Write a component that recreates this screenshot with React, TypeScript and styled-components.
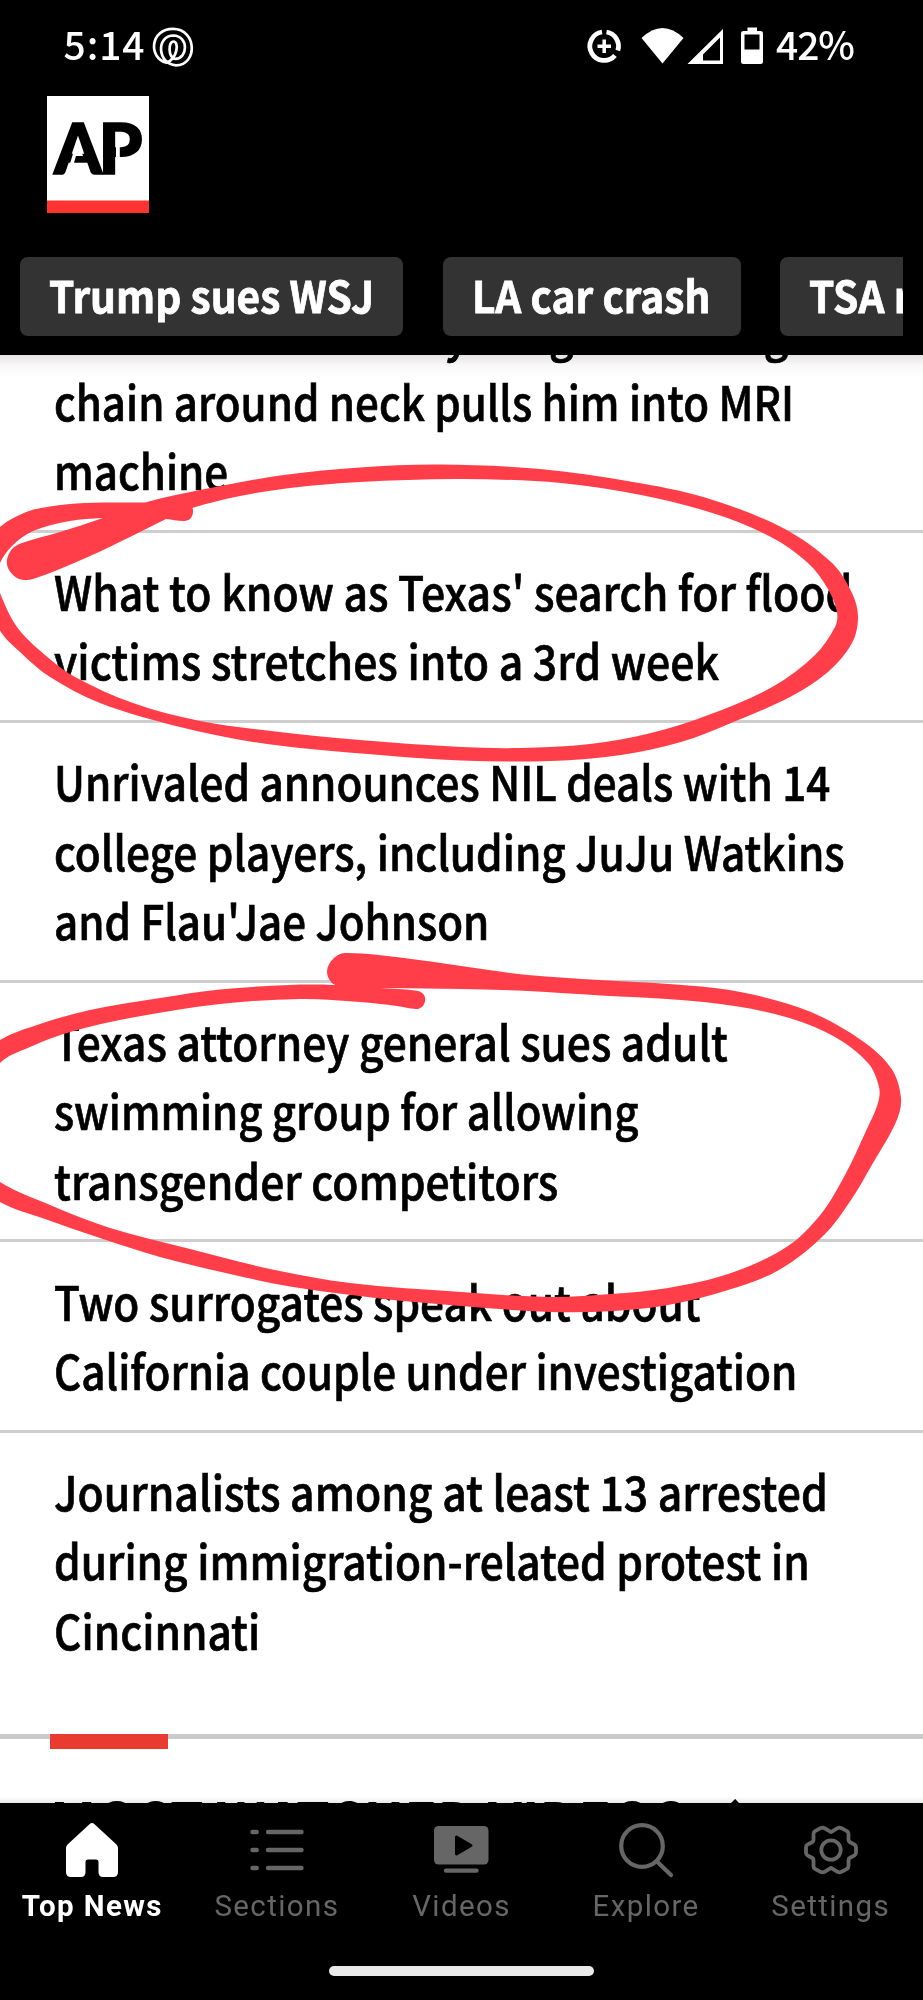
import React from "react";
import styled, { createGlobalStyle } from "styled-components";

const Global = createGlobalStyle`
  * { box-sizing: border-box; }
  body { margin: 0; background: #000; }
`;

const sans = `"Noto Sans CJK SC", "Noto Sans", sans-serif`;

const Screen = styled.main`
  position: relative;
  width: 923px;
  height: 2000px;
  overflow: hidden;
  display: flex;
  flex-direction: column;
  background: #fff;
  font-family: ${sans};
`;

const Header = styled.header`
  flex: none;
  height: 355px;
  background: #000;
  color: #fff;
  display: flex;
  flex-direction: column;
`;

const StatusBar = styled.div`
  height: 96px;
  padding: 0 69px 0 63.5px;
  display: flex;
  align-items: flex-start;
  justify-content: space-between;
`;

const StatusGroup = styled.div<{ $gap: number }>`
  display: flex;
  align-items: flex-start;
  gap: ${(p) => p.$gap}px;
`;

const StatusText = styled.span<{ $spacing: number }>`
  font-size: 39px;
  font-weight: 500;
  line-height: 56px;
  margin-top: 15px;
  letter-spacing: ${(p) => p.$spacing}px;
`;

const Logo = styled.svg`
  display: block;
  flex: none;
  margin-left: 47px;
`;

const LogoText = styled.text`
  font-family: Lato, sans-serif;
  font-weight: 900;
  font-size: 70px;
  stroke: #000;
  stroke-width: 1.6px;
`;

const Topics = styled.nav`
  margin: 44px 20px 0;
  display: flex;
  gap: 39.5px;
  overflow: hidden;
`;

const Topic = styled.a<{ $width: number }>`
  flex: none;
  width: ${(p) => p.$width}px;
  height: 79px;
  padding-left: 29px;
  border-radius: 8px;
  background: #333;
  color: #fff;
  font-size: 43.5px;
  font-weight: 700;
  line-height: 75px;
  white-space: nowrap;
`;

const TopicLabel = styled.span`
  display: inline-block;
  transform: scaleX(0.934);
  transform-origin: left;
  -webkit-text-stroke: 0.8px #fff;
`;

const Feed = styled.div`
  flex: 1;
  min-height: 0;
  overflow: hidden;
  position: relative;
  &::before {
    content: "";
    position: absolute;
    inset: 0 0 auto;
    height: 22px;
    background: linear-gradient(#e6e3e4, #f8f8f8 45%, rgba(255, 255, 255, 0));
    mix-blend-mode: multiply;
  }
  &::after {
    content: "";
    position: absolute;
    inset: auto 0 0;
    height: 6px;
    background: linear-gradient(rgba(0, 0, 0, 0), rgba(0, 0, 0, 0.09));
  }
`;

const Stories = styled.div`
  margin-top: -82px;
`;

const Story = styled.article`
  padding: 23.3px 0 25.5px 54px;
  border-bottom: 3px solid #cecece;
  &:last-child {
    border-bottom: 0;
    padding-bottom: 69.5px;
  }
`;

const Line = styled.span<{ $fit: number }>`
  display: block;
  width: max-content;
  height: 69.3px;
  line-height: 69.3px;
  font-size: 48px;
  font-weight: 500;
  color: #000;
  white-space: nowrap;
  transform: scaleX(${(p) => p.$fit});
  transform-origin: left;
  -webkit-text-stroke: 0.7px #000;
`;

const Section = styled.section`
  border-top: 5px solid #cacaca;
  padding-left: 50px;
`;

const Accent = styled.div`
  width: 118px;
  height: 15px;
  margin-top: -5px;
  background: #e93b30;
`;

const SectionTitle = styled.h2`
  margin: 30.5px 0 0;
  display: flex;
  align-items: center;
  gap: 44px;
  font-size: 54px;
  font-weight: 700;
  line-height: 80px;
  white-space: nowrap;
`;

const TabBar = styled.footer`
  flex: none;
  height: 197px;
  background: #000;
  display: flex;
  flex-direction: column;
  align-items: center;
`;

const Tabs = styled.div`
  align-self: stretch;
  display: grid;
  grid-template-columns: repeat(5, 1fr);
`;

const Tab = styled.a<{ $active?: boolean }>`
  display: flex;
  flex-direction: column;
  align-items: center;
  padding-top: 17px;
  color: ${(p) => (p.$active ? "#fff" : "#666")};
  font-family: Roboto, sans-serif;
  font-size: 29.5px;
  font-weight: ${(p) => (p.$active ? 700 : 400)};
  letter-spacing: 1.4px;
  line-height: 36px;
`;

const TabIcon = styled.svg`
  width: 60px;
  height: 60px;
  margin-bottom: 8px;
`;

const HomeHandle = styled.div`
  width: 265px;
  height: 10px;
  margin-top: 42px;
  border-radius: 5px;
  background: #eaeaea;
`;

const Ink = styled.svg`
  position: absolute;
  top: 0;
  left: 0;
  pointer-events: none;
`;

type Pt = [number, number];

/* Closed Catmull-Rom curve through the points, as cubic segments. */
function smooth(p: Pt[]): string {
  const n = p.length;
  let d = `M${p[0]}`;
  for (let i = 0; i < n; i++) {
    const a = p[(i - 1 + n) % n], b = p[i], c = p[(i + 1) % n], e = p[(i + 2) % n];
    const k = Math.hypot(c[0] - b[0], c[1] - b[1]) / 3;
    const t1 = [c[0] - a[0], c[1] - a[1]], t2 = [e[0] - b[0], e[1] - b[1]];
    const l1 = Math.hypot(t1[0], t1[1]) || 1, l2 = Math.hypot(t2[0], t2[1]) || 1;
    d += `C${b[0] + (t1[0] / l1) * k},${b[1] + (t1[1] / l1) * k} ${c[0] - (t2[0] / l2) * k},${c[1] - (t2[1] / l2) * k} ${c}`;
  }
  return d + "Z";
}

const floodMark: Pt[] = [
  [22, 543], [60, 532], [100, 519], [147, 502], [200, 490], [280, 475.5], [360, 467.5], [440, 464.5], [540, 469],
  [633, 482], [705, 497.5], [781, 527], [831, 562], [852, 593], [858, 617], [852, 643], [828, 672], [790, 697],
  [731, 723], [681, 742], [621, 755], [551, 761], [461, 760.5], [380, 755], [267, 744], [180, 727], [100, 703],
  [50, 677], [20, 652], [0, 630.5], [-16, 590], [-14, 548], [0, 527], [25, 512.5], [50, 506.5], [85, 503], [147, 502.5],
  [180, 503], [191, 506], [193, 512], [190, 519], [183, 521], [166, 519], [135, 518], [102, 518], [70, 521], [33, 531], [12, 546], [0, 563], [-3, 578],
  [0, 593], [17, 627], [45, 655], [75, 677], [133, 703], [200, 721], [267, 730.5], [360, 740], [461, 747], [520, 748],
  [590, 744], [651, 733], [711, 714], [774, 686], [815, 655], [835, 627], [837, 612], [828, 589], [808, 563],
  [771, 537], [714, 513.5], [641, 495], [561, 483], [461, 479], [360, 482], [290, 488], [240, 496], [192, 508],
  [166, 519], [130, 537], [90, 556], [33, 579], [19, 579], [9, 570], [7, 560], [12, 549],
];

const texasMark: Pt[] = [
  [345, 953], [400, 957.5], [461, 966], [528, 975], [600, 980], [701, 986.5], [755, 995], [811, 1012], [861, 1040],
  [891, 1068], [901, 1098], [896, 1122], [873, 1163], [851, 1200], [824, 1235], [779, 1270], [728, 1290], [668, 1305],
  [614, 1311], [550, 1312], [461, 1306], [380, 1298.5], [290, 1286.5], [230, 1274], [160, 1257], [100, 1238],
  [45, 1219], [0, 1202], [-24, 1180], [-34, 1120], [-20, 1060], [0, 1040], [40, 1024], [90, 1010], [160, 998],
  [220, 989.5], [290, 985], [333, 985], [380, 988], [418, 991], [424, 995], [425, 1001], [422, 1007], [416, 1009], [397, 1006], [360, 1002],
  [300, 999], [220, 1004], [130, 1018], [70, 1032], [30, 1047], [0, 1063], [-12, 1090], [-18, 1130], [-10, 1168],
  [0, 1182], [50, 1205], [110, 1228], [190, 1249], [270, 1269], [350, 1283], [461, 1292], [550, 1297], [611, 1294],
  [668, 1288], [731, 1273], [788, 1246], [821, 1214], [845, 1175], [866, 1131], [878, 1103], [879, 1087], [868, 1063],
  [835, 1037], [791, 1018.5], [738, 1006.5], [674, 999.5], [601, 995.5], [528, 991], [461, 989], [390, 988], [345, 987],
  [332, 983], [327, 971], [333, 959],
];

type FittedLine = [string, number];

const stories: FittedLine[][] = [
  [
    ["Man dies after heavy weight-training", 0.883],
    ["chain around neck pulls him into MRI", 0.876],
    ["machine", 0.878],
  ],
  [
    ["What to know as Texas' search for flood", 0.89],
    ["victims stretches into a 3rd week", 0.891],
  ],
  [
    ["Unrivaled announces NIL deals with 14", 0.879],
    ["college players, including JuJu Watkins", 0.882],
    ["and Flau'Jae Johnson", 0.877],
  ],
  [
    ["Texas attorney general sues adult", 0.885],
    ["swimming group for allowing", 0.873],
    ["transgender competitors", 0.888],
  ],
  [
    ["Two surrogates speak out about", 0.883],
    ["California couple under investigation", 0.88],
  ],
  [
    ["Journalists among at least 13 arrested", 0.89],
    ["during immigration-related protest in", 0.884],
    ["Cincinnati", 0.885],
  ],
];

const topics = [
  { label: "Trump sues WSJ", width: 383 },
  { label: "LA car crash", width: 298 },
  { label: "TSA rules", width: 260 },
];

const tabs = [
  {
    label: "Top News",
    icon: (
      <path
        fill="currentColor"
        d="M27.5 4.2Q30 2 32.5 4.2L54.5 24.5Q56 26 56 28V52Q56 57 51 57H41Q36.5 57 36.5 52V42Q36.5 39.5 34 39.5H26Q23.5 39.5 23.5 42V52Q23.5 57 19 57H9Q4 57 4 52V28Q4 26 5.5 24.5Z"
      />
    ),
  },
  {
    label: "Sections",
    icon: (
      <path stroke="currentColor" strokeWidth="4.4" strokeLinecap="round" d="M5.5 12H9.7M21 12H54.5M5.5 30H9.7M21 30H54.5M5.5 48H9.7M21 48H54.5" />
    ),
  },
  {
    label: "Videos",
    icon: (
      <>
        <rect x="3" y="6" width="54.5" height="38.5" rx="4.5" fill="currentColor" />
        <path d="M25.5 17L40 25.5L25.5 34Z" fill="#000" stroke="#000" strokeWidth="3" strokeLinejoin="round" />
        <path stroke="currentColor" strokeWidth="4.4" strokeLinecap="round" d="M15 50.6H45.5" />
      </>
    ),
  },
  {
    label: "Explore",
    icon: (
      <g stroke="currentColor" strokeWidth="4.2" strokeLinecap="round" fill="none">
        <circle cx="26" cy="26" r="20.8" />
        <path d="M41.5 42L55 55" />
      </g>
    ),
  },
  {
    label: "Settings",
    icon: (
      <g stroke="currentColor" strokeWidth="3.8" strokeLinejoin="round" fill="none">
        <path d="M30 12.2L36.5 8.2Q38.5 7.2 40.5 8.2L46 11.2Q47.5 12.2 47.5 14V20Q47.500 21.3 48.7 22L53.5 24.6Q55 25.5 55 27.5V32.5Q55 34.5 53.5 35.4L48.7 38Q47.5 38.7 47.5 40V46Q47.5 47.8 46 48.8L40.5 51.8Q38.5 52.8 36.5 51.8L30 47.8L23.5 51.8Q21.5 52.8 19.5 51.8L14 48.8Q12.5 47.8 12.5 46V40Q12.5 38.7 11.3 38L6.500 35.4Q5 34.5 5 32.5V27.5Q5 25.5 6.5 24.6L11.3 22Q12.5 21.3 12.5 20V14Q12.5 12.2 14 11.2L19.5 8.2Q21.5 7.2 23.5 8.2Z" />
        <circle cx="30" cy="30" r="9.7" />
      </g>
    ),
  },
];

function SpiralIcon() {
  return (
    <svg width="50" height="80" viewBox="149 0 50 80" fill="none" stroke="#fff" strokeWidth="2.7">
      <path d="M167.500 62.800C149 58 151 28.800 174 28.800C198 29 199 65 177 65.300C158 64 157 35.500 174.500 35.500C190 36 189 59 176 58.800C169 57 169 41.500 174.500 41.500C180 41.500 179 58 167.500 62.800Z" />
    </svg>
  );
}

function SystemIcons() {
  return (
    <svg width="190" height="80" viewBox="580 0 190 80">
      <g fill="none" stroke="#fff">
        <path strokeWidth="4.800" d="M605.500 32A14.300 14.300 0 0 1 616.800 50.500M614 55.500A14.300 14.300 0 1 1 601 32" />
        <path strokeWidth="3.500" d="M603.200 39.500V53M596.500 46.200H610" />
      </g>
      <path fill="#fff" d="M661.500 63.500L640.500 38Q661.500 18 682.500 38Z" />
      <path fill="#fff" fillRule="evenodd" d="M722 29V64H686.500ZM719 37.500L702 54.500V60.500H719Z" />
      <path fill="#fff" fillRule="evenodd" d="M746.500 27.500H756V31H759.500Q762 31 762 33.500V61.500Q762 64 759.500 64H742.500Q740 64 740 61.500V33.500Q740 31 742.500 31H746.500ZM743.500 34.500V49.500H758.500V34.500Z" />
    </svg>
  );
}

export default function App() {
  return (
    <Screen>
      <Global />
      <Header>
        <StatusBar>
          <StatusGroup $gap={2.5}>
            <StatusText $spacing={0.9}>5:14</StatusText>
            <SpiralIcon />
          </StatusGroup>
          <StatusGroup $gap={5}>
            <SystemIcons />
            <StatusText $spacing={-1}>42%</StatusText>
          </StatusGroup>
        </StatusBar>
        <Logo width="102" height="117" viewBox="47 96 102 117">
          <path fill="#fff" d="M47 96H149V213H47Z" />
          <path fill="#ff332f" d="M47 200.500H149V213H47Z" />
          <LogoText x="54" y="173.500" textLength="48" lengthAdjust="spacingAndGlyphs">A</LogoText>
          <LogoText x="98.500" y="173.500" textLength="44" lengthAdjust="spacingAndGlyphs">P</LogoText>
          <path fill="#fff" d="M77.500 139L83 156H76L73 166L71 175H66.500Z" />
          <path fill="#fff" d="M116 133.500H119.800V175.500H116Z" />
        </Logo>
        <Topics>
          {topics.map((t) => (
            <Topic key={t.label} $width={t.width}>
              <TopicLabel>{t.label}</TopicLabel>
            </Topic>
          ))}
        </Topics>
      </Header>

      <Feed>
        <Stories>
          {stories.map((lines) => (
            <Story key={lines[0][0]}>
              {lines.map(([text, fit]) => (
                <Line key={text} $fit={fit}>{text}</Line>
              ))}
            </Story>
          ))}
        </Stories>
        <Section>
          <Accent />
          <SectionTitle>
            MOST WATCHED VIDEOS
            <svg width="24" height="40" viewBox="0 0 24 40">
              <path d="M2 2L18 19L2 36" fill="none" stroke="#000" strokeWidth="6" />
            </svg>
          </SectionTitle>
        </Section>
      </Feed>

      <TabBar>
        <Tabs>
          {tabs.map((t, i) => (
            <Tab key={t.label} $active={i === 0}>
              <TabIcon viewBox="0 0 60 60">{t.icon}</TabIcon>
              {t.label}
            </Tab>
          ))}
        </Tabs>
        <HomeHandle />
      </TabBar>

      <Ink width="923" height="2000" viewBox="0 0 923 2000" fill="#ff3e49">
        <path d={smooth(floodMark)} />
        <path d={smooth(texasMark)} />
      </Ink>
    </Screen>
  );
}
